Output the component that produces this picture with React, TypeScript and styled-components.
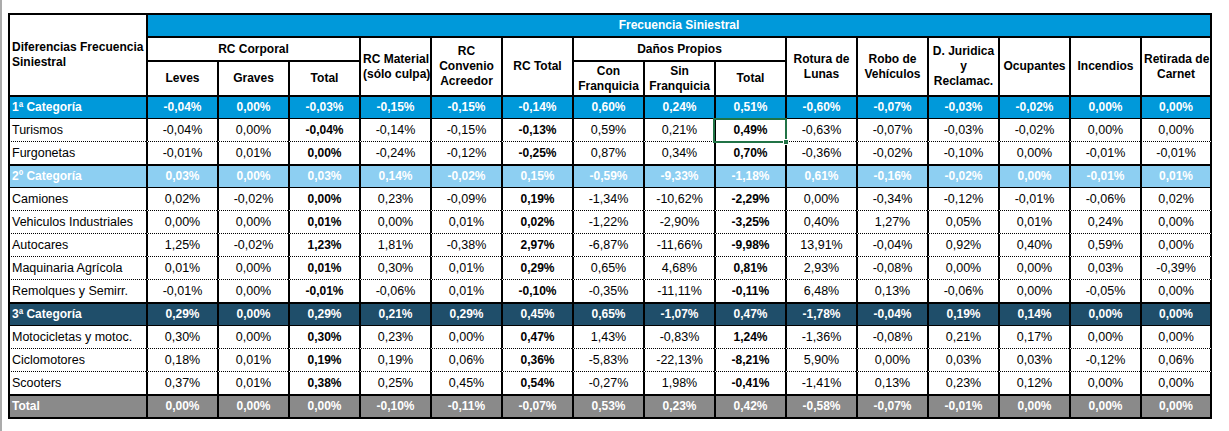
import React from "react";
import styled, { createGlobalStyle, css } from "styled-components";

const GlobalStyle = createGlobalStyle`
  html, body { margin: 0; padding: 0; background: #ffffff; }
  body { font-family: "Liberation Sans", Arial, sans-serif; }
  * { box-sizing: border-box; }
`;

type Variant = "cat1" | "cat2" | "cat3" | "total" | "data";
type TopLine = "thick" | "solid" | "dotted";

const COLORS: Record<Variant, string> = {
  cat1: "#0099da",
  cat2: "#8dcff2",
  cat3: "#1f4e6a",
  total: "#8a8a8a",
  data: "#ffffff",
};

const Page = styled.div`
  min-height: 431px;
  border-left: 2px solid #ababab;
  padding: 13px 0 0 6px;
`;

const Sheet = styled.table`
  border-collapse: separate;
  border-spacing: 0;
  table-layout: fixed;
  width: 1204px;
  color: #000;
`;

const HeadRow = styled.tr<{ $h: number }>`
  height: ${(p) => p.$h}px;
`;

const BodyRow = styled.tr<{ $last?: boolean }>`
  height: ${(p) => (p.$last ? 25 : 23)}px;
`;

const HeadCell = styled.th<{ $blue?: boolean; $left?: boolean; $last?: boolean }>`
  border-left: 2px solid #000;
  border-top: 2px solid #000;
  ${(p) => p.$last && css`border-right: 2px solid #000;`}
  padding: 0 2px;
  font-size: 12px;
  font-weight: bold;
  line-height: 15px;
  vertical-align: middle;
  text-align: ${(p) => (p.$left ? "left" : "center")};
  background: ${(p) => (p.$blue ? COLORS.cat1 : "#fff")};
  color: ${(p) => (p.$blue ? "#fff" : "#000")};
  white-space: nowrap;
`;

const Cell = styled.td<{
  $variant: Variant;
  $top: TopLine;
  $bold?: boolean;
  $label?: boolean;
  $last?: boolean;
  $bottom?: boolean;
  $selected?: boolean;
}>`
  position: ${(p) => (p.$selected ? "relative" : "static")};
  padding: 0 2px;
  border-left: 2px solid #000;
  border-top: ${(p) =>
    p.$top === "thick" ? "2px solid #000" : p.$top === "solid" ? "1px solid #000" : "1px dotted #000"};
  ${(p) => p.$last && css`border-right: 2px solid #000;`}
  ${(p) => p.$bottom && css`border-bottom: 2px solid #000;`}
  background: ${(p) => COLORS[p.$variant]};
  color: ${(p) => (p.$variant === "data" ? "#000" : "#fff")};
  font-weight: ${(p) => (p.$bold || p.$variant !== "data" ? "bold" : "normal")};
  font-size: ${(p) => (p.$bold || p.$variant !== "data" ? "12px" : "12.5px")};
  text-align: ${(p) => (p.$label ? "left" : "center")};
  vertical-align: middle;
  white-space: nowrap;
  overflow: visible;
  line-height: 15px;
`;

const Selection = styled.span`
  position: absolute;
  top: -1px;
  left: -3px;
  right: -2px;
  bottom: -2px;
  border: 2px solid #217346;
  pointer-events: none;
`;

const Handle = styled.span`
  position: absolute;
  right: -4px;
  bottom: -4px;
  width: 6px;
  height: 6px;
  background: #217346;
  border: 1px solid #fff;
`;

type Row = { label: string; variant: Variant; values: string[] };

const rows: Row[] = [
  { label: "1ª Categoría", variant: "cat1", values: ["-0,04%", "0,00%", "-0,03%", "-0,15%", "-0,15%", "-0,14%", "0,60%", "0,24%", "0,51%", "-0,60%", "-0,07%", "-0,03%", "-0,02%", "0,00%", "0,00%"] },
  { label: "Turismos", variant: "data", values: ["-0,04%", "0,00%", "-0,04%", "-0,14%", "-0,15%", "-0,13%", "0,59%", "0,21%", "0,49%", "-0,63%", "-0,07%", "-0,03%", "-0,02%", "0,00%", "0,00%"] },
  { label: "Furgonetas", variant: "data", values: ["-0,01%", "0,01%", "0,00%", "-0,24%", "-0,12%", "-0,25%", "0,87%", "0,34%", "0,70%", "-0,36%", "-0,02%", "-0,10%", "0,00%", "-0,01%", "-0,01%"] },
  { label: "2º Categoría", variant: "cat2", values: ["0,03%", "0,00%", "0,03%", "0,14%", "-0,02%", "0,15%", "-0,59%", "-9,33%", "-1,18%", "0,61%", "-0,16%", "-0,02%", "0,00%", "-0,01%", "0,01%"] },
  { label: "Camiones", variant: "data", values: ["0,02%", "-0,02%", "0,00%", "0,23%", "-0,09%", "0,19%", "-1,34%", "-10,62%", "-2,29%", "0,00%", "-0,34%", "-0,12%", "-0,01%", "-0,06%", "0,02%"] },
  { label: "Vehiculos Industriales", variant: "data", values: ["0,00%", "0,00%", "0,01%", "0,00%", "0,01%", "0,02%", "-1,22%", "-2,90%", "-3,25%", "0,40%", "1,27%", "0,05%", "0,01%", "0,24%", "0,00%"] },
  { label: "Autocares", variant: "data", values: ["1,25%", "-0,02%", "1,23%", "1,81%", "-0,38%", "2,97%", "-6,87%", "-11,66%", "-9,98%", "13,91%", "-0,04%", "0,92%", "0,40%", "0,59%", "0,00%"] },
  { label: "Maquinaria Agrícola", variant: "data", values: ["0,01%", "0,00%", "0,01%", "0,30%", "0,01%", "0,29%", "0,65%", "4,68%", "0,81%", "2,93%", "-0,08%", "0,00%", "0,00%", "0,03%", "-0,39%"] },
  { label: "Remolques y Semirr.", variant: "data", values: ["-0,01%", "0,00%", "-0,01%", "-0,06%", "0,01%", "-0,10%", "-0,35%", "-11,11%", "-0,11%", "6,48%", "0,13%", "-0,06%", "0,00%", "-0,05%", "0,00%"] },
  { label: "3ª Categoría", variant: "cat3", values: ["0,29%", "0,00%", "0,29%", "0,21%", "0,29%", "0,45%", "0,65%", "-1,07%", "0,47%", "-1,78%", "-0,04%", "0,19%", "0,14%", "0,00%", "0,00%"] },
  { label: "Motocicletas y motoc.", variant: "data", values: ["0,30%", "0,00%", "0,30%", "0,23%", "0,00%", "0,47%", "1,43%", "-0,83%", "1,24%", "-1,36%", "-0,08%", "0,21%", "0,17%", "0,00%", "0,00%"] },
  { label: "Ciclomotores", variant: "data", values: ["0,18%", "0,01%", "0,19%", "0,19%", "0,06%", "0,36%", "-5,83%", "-22,13%", "-8,21%", "5,90%", "0,00%", "0,03%", "0,03%", "-0,12%", "0,06%"] },
  { label: "Scooters", variant: "data", values: ["0,37%", "0,01%", "0,38%", "0,25%", "0,45%", "0,54%", "-0,27%", "1,98%", "-0,41%", "-1,41%", "0,13%", "0,23%", "0,12%", "0,00%", "0,00%"] },
  { label: "Total", variant: "total", values: ["0,00%", "0,00%", "0,00%", "-0,10%", "-0,11%", "-0,07%", "0,53%", "0,23%", "0,42%", "-0,58%", "-0,07%", "-0,01%", "0,00%", "0,00%", "0,00%"] },
];

const BOLD_COLS = new Set([2, 5, 8]);
const colWidths = [138, ...Array(14).fill(71), 72];

export default function App() {
  return (
    <>
      <GlobalStyle />
      <Page>
        <Sheet>
          <colgroup>
            {colWidths.map((w, i) => (
              <col key={i} style={{ width: w }} />
            ))}
          </colgroup>
          <thead>
            <HeadRow $h={23}>
              <HeadCell rowSpan={3} $left>
                Diferencias Frecuencia
                <br />
                Siniestral
              </HeadCell>
              <HeadCell colSpan={15} $blue $last>
                Frecuencia Siniestral
              </HeadCell>
            </HeadRow>
            <HeadRow $h={24}>
              <HeadCell colSpan={3}>RC Corporal</HeadCell>
              <HeadCell rowSpan={2}>
                RC Material
                <br />
                (sólo culpa)
              </HeadCell>
              <HeadCell rowSpan={2}>
                RC
                <br />
                Convenio
                <br />
                Acreedor
              </HeadCell>
              <HeadCell rowSpan={2}>RC Total</HeadCell>
              <HeadCell colSpan={3}>Daños Propios</HeadCell>
              <HeadCell rowSpan={2}>
                Rotura de
                <br />
                Lunas
              </HeadCell>
              <HeadCell rowSpan={2}>
                Robo de
                <br />
                Vehículos
              </HeadCell>
              <HeadCell rowSpan={2}>
                D. Juridica
                <br />y<br />
                Reclamac.
              </HeadCell>
              <HeadCell rowSpan={2}>Ocupantes</HeadCell>
              <HeadCell rowSpan={2}>Incendios</HeadCell>
              <HeadCell rowSpan={2} $last>
                Retirada de
                <br />
                Carnet
              </HeadCell>
            </HeadRow>
            <HeadRow $h={35}>
              <HeadCell>Leves</HeadCell>
              <HeadCell>Graves</HeadCell>
              <HeadCell>Total</HeadCell>
              <HeadCell>
                Con
                <br />
                Franquicia
              </HeadCell>
              <HeadCell>
                Sin
                <br />
                Franquicia
              </HeadCell>
              <HeadCell>Total</HeadCell>
            </HeadRow>
          </thead>
          <tbody>
            {rows.map((row, ri) => {
              const prev = ri > 0 ? rows[ri - 1] : null;
              const top: TopLine =
                row.variant !== "data" || !prev
                  ? "thick"
                  : prev.variant !== "data"
                  ? "solid"
                  : "dotted";
              const isLast = ri === rows.length - 1;
              return (
                <BodyRow key={row.label} $last={isLast}>
                  <Cell $variant={row.variant} $top={top} $label $bottom={isLast}>
                    {row.label}
                  </Cell>
                  {row.values.map((v, ci) => {
                    const selected = ri === 1 && ci === 8;
                    return (
                      <Cell
                        key={ci}
                        $variant={row.variant}
                        $top={top}
                        $bold={BOLD_COLS.has(ci)}
                        $last={ci === row.values.length - 1}
                        $bottom={isLast}
                        $selected={selected}
                      >
                        {v}
                        {selected && (
                          <Selection>
                            <Handle />
                          </Selection>
                        )}
                      </Cell>
                    );
                  })}
                </BodyRow>
              );
            })}
          </tbody>
        </Sheet>
      </Page>
    </>
  );
}
